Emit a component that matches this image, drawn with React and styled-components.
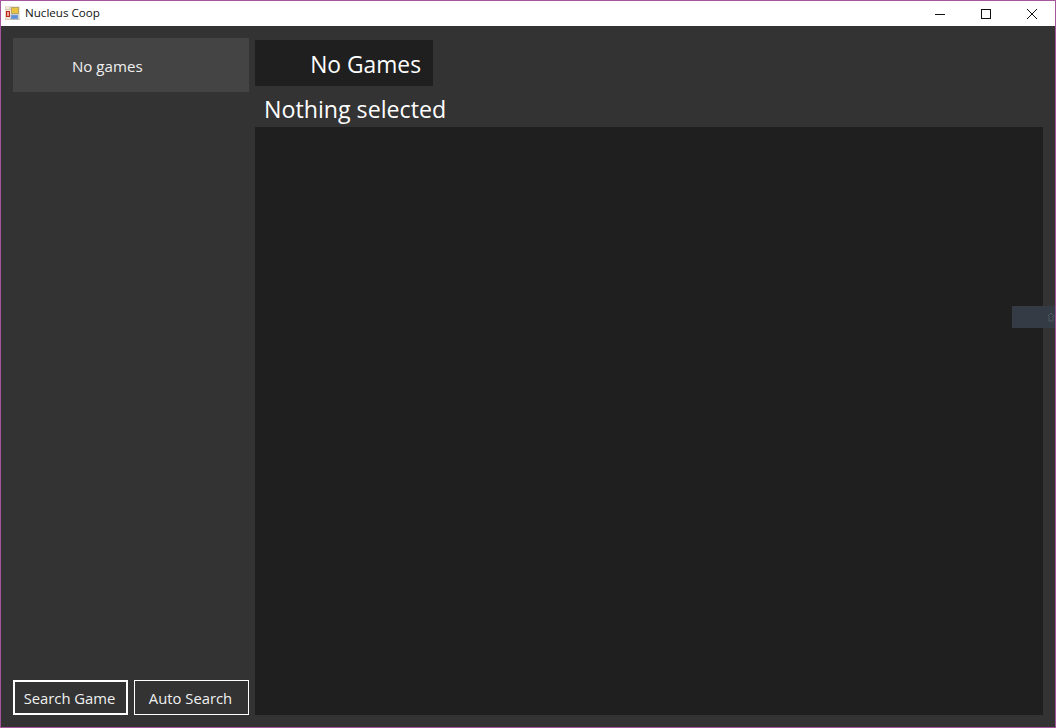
import styled, { createGlobalStyle } from 'styled-components';

const GlobalStyle = createGlobalStyle`
  html, body {
    margin: 0;
    padding: 0;
    background: #333333;
  }
`;

function AppIcon() {
  return (
    <svg width="15" height="15" viewBox="0 0 15 15">
      <rect x="0" y="0" width="15" height="14" fill="#efe9dc" />
      <path d="M0 3.5h6M0 13.5h15M5 0v4M0 0v14" stroke="#d6ccb4" fill="none" />
      <rect x="6.5" y="1.5" width="7" height="6" fill="#e8c440" stroke="#b8a468" />
      <rect x="1.5" y="5.5" width="3" height="5" fill="#e8a898" stroke="#c02a20" />
      <rect x="6" y="9" width="7" height="4" fill="#5f8fd4" stroke="#90a8cc" strokeWidth="0.8" />
    </svg>
  );
}

function App() {
  return (
    <Window>
      <GlobalStyle />
      <TitleBar>
        <TitleLeft>
          <AppIcon />
          <TitleText>Nucleus Coop</TitleText>
        </TitleLeft>
        <WindowControls>
          <ControlButton>
            <svg width="12" height="12" viewBox="0 0 12 12">
              <path d="M1 6.5h10" stroke="#111" fill="none" />
            </svg>
          </ControlButton>
          <ControlButton>
            <svg width="12" height="12" viewBox="0 0 12 12">
              <rect x="1.5" y="1.5" width="9" height="9" stroke="#111" fill="none" />
            </svg>
          </ControlButton>
          <ControlButton>
            <svg width="12" height="12" viewBox="0 0 12 12">
              <path d="M1 1l10 10M11 1L1 11" stroke="#111" fill="none" />
            </svg>
          </ControlButton>
        </WindowControls>
      </TitleBar>
      <Body>
        <Sidebar>
          <GameItem>No games</GameItem>
          <SearchRow>
            <SearchButton $primary>Search Game</SearchButton>
            <SearchButton>Auto Search</SearchButton>
          </SearchRow>
        </Sidebar>
        <Main>
          <GameHeader>No Games</GameHeader>
          <SelectedLabel>Nothing selected</SelectedLabel>
          <ContentPanel />
        </Main>
        <ScrollTab>
          <svg width="8" height="12" viewBox="0 0 8 12">
            <path d="M1 5l3-3 3 3M2 5v5h4V5" stroke="#4f5761" fill="none" />
          </svg>
        </ScrollTab>
      </Body>
    </Window>
  );
}

const Window = styled.div`
  box-sizing: border-box;
  display: flex;
  flex-direction: column;
  width: 1056px;
  height: 728px;
  border: 1px solid #a4579c;
  overflow: hidden;
  font-family: 'Open Sans', 'Noto Sans', sans-serif;
`;

const TitleBar = styled.div`
  display: flex;
  align-items: center;
  justify-content: space-between;
  height: 25px;
  flex-shrink: 0;
  background: #ffffff;
`;

const TitleLeft = styled.div`
  display: flex;
  align-items: center;
  gap: 5px;
  padding-left: 4px;
`;

const TitleText = styled.span`
  padding-bottom: 3px;
  font-size: 11.6px;
  color: #111111;
`;

const WindowControls = styled.div`
  display: flex;
  height: 100%;
`;

const ControlButton = styled.div`
  display: flex;
  align-items: center;
  justify-content: center;
  width: 46px;
  height: 100%;
`;

const Body = styled.div`
  position: relative;
  flex: 1;
  display: flex;
  gap: 6px;
  padding: 12px;
  background: #333333;
`;

const Sidebar = styled.div`
  display: flex;
  flex-direction: column;
  justify-content: space-between;
  width: 236px;
  flex-shrink: 0;
`;

const GameItem = styled.div`
  box-sizing: border-box;
  height: 54px;
  padding-left: 59px;
  line-height: 57px;
  background: #444444;
  color: #f0f0f0;
  font-size: 15.1px;
`;

const SearchRow = styled.div`
  display: flex;
  justify-content: space-between;
`;

const SearchButton = styled.div`
  box-sizing: border-box;
  display: flex;
  align-items: center;
  justify-content: center;
  width: 115px;
  height: 35px;
  padding-right: 2px;
  border: ${(props) => (props.$primary ? '2px' : '1px')} solid #ffffff;
  background: #333333;
  color: #f0f0f0;
  font-size: 14.8px;
`;

const Main = styled.div`
  flex: 1;
  display: flex;
  flex-direction: column;
  align-items: flex-start;
  padding-top: 2px;
`;

const GameHeader = styled.div`
  box-sizing: border-box;
  width: 178px;
  height: 46px;
  padding-right: 12px;
  background: #1f1f1f;
  color: #ffffff;
  font-size: 22.8px;
  line-height: 50px;
  text-align: right;
`;

const SelectedLabel = styled.div`
  height: 41px;
  padding-left: 9px;
  color: #ffffff;
  font-size: 23.2px;
  line-height: 47px;
`;

const ContentPanel = styled.div`
  flex: 1;
  align-self: stretch;
  background: #1f1f1f;
`;

const ScrollTab = styled.div`
  position: absolute;
  top: 280px;
  right: 0;
  display: flex;
  align-items: center;
  justify-content: flex-end;
  width: 43px;
  height: 22px;
  background: #343b44;
`;

export default App;
